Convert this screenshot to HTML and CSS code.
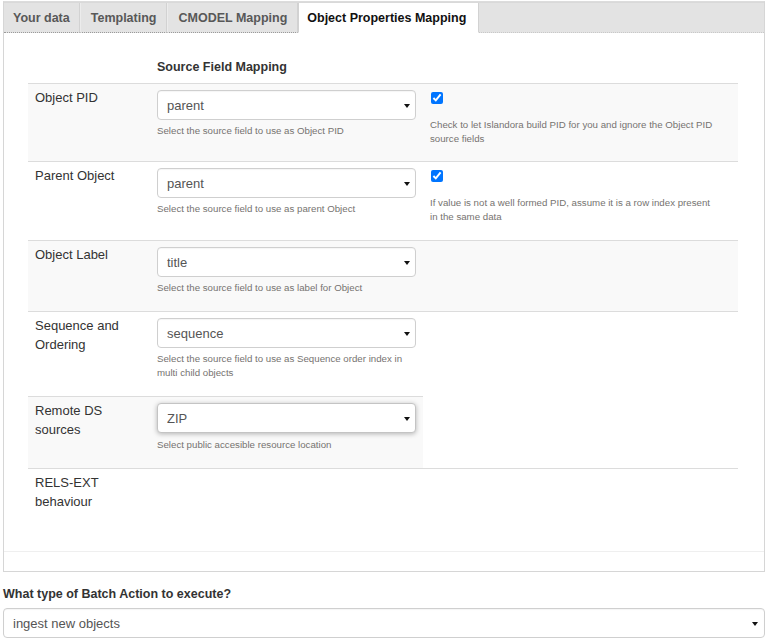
FILE: index.html
```html
<!DOCTYPE html>
<html>
<head>
<meta charset="utf-8">
<link rel="stylesheet" href="styles.css">
</head>
<body>
<div class="wrap">
  <div class="panel">
    <ul class="tabs">
      <li class="tab">Your data</li>
      <li class="tab">Templating</li>
      <li class="tab">CMODEL Mapping</li>
      <li class="tab active">Object Properties Mapping</li>
      <li class="tab-fill"></li>
    </ul>
    <div class="panel-body">
      <table class="map">
        <colgroup>
          <col class="c1"><col class="c2"><col class="c3">
        </colgroup>
        <thead>
          <tr><th></th><th>Source Field Mapping</th><th></th></tr>
        </thead>
        <tbody>
          <tr class="odd">
            <td class="lbl">Object PID</td>
            <td><div class="sel"><select><option>parent</option></select></div><p class="help">Select the source field to use as Object PID</p></td>
            <td><div class="chk"><input type="checkbox" checked></div><p class="help help3">Check to let Islandora build PID for you and ignore the Object PID source fields</p></td>
          </tr>
          <tr>
            <td class="lbl">Parent Object</td>
            <td><div class="sel"><select><option>parent</option></select></div><p class="help">Select the source field to use as parent Object</p></td>
            <td><div class="chk"><input type="checkbox" checked></div><p class="help help3 help3b">If value is not a well formed PID, assume it is a row index present in the same data</p></td>
          </tr>
          <tr class="odd">
            <td class="lbl">Object Label</td>
            <td><div class="sel"><select><option>title</option></select></div><p class="help">Select the source field to use as label for Object</p></td>
            <td></td>
          </tr>
          <tr>
            <td class="lbl">Sequence and Ordering</td>
            <td><div class="sel"><select><option>sequence</option></select></div><p class="help">Select the source field to use as Sequence order index in multi child objects</p></td>
            <td></td>
          </tr>
          <tr class="odd">
            <td class="lbl">Remote DS sources</td>
            <td><div class="sel focus"><select><option>ZIP</option></select></div><p class="help help5">Select public accesible resource location</p></td>
          </tr>
          <tr>
            <td class="lbl">RELS-EXT behaviour</td>
            <td></td>
            <td></td>
          </tr>
        </tbody>
      </table>
    </div>
    <div class="panel-foot"></div>
  </div>
  <label class="q">What type of Batch Action to execute?</label>
  <div class="sel wide"><select><option>ingest new objects</option></select></div>
</div>
</body>
</html>
```
FILE: styles.css
```css
html, body {
  margin: 0;
  padding: 0;
  background: #fff;
}
body {
  padding: 1px 0 0 3px;
  font-family: "Liberation Sans", Arial, sans-serif;
  font-size: 13px;
  color: #333;
}
.wrap {
  width: 762px;
}
.panel {
  border: 1px solid #d6d6d6;
  border-top-color: #dcdcdc;
}
.tabs {
  list-style: none;
  margin: 0;
  padding: 0;
  display: flex;
  height: 30px;
  background: #e3e3e3;
  border-top: 1px solid #d9d9d9;
}
.tab {
  font-size: 12.5px;
  font-weight: bold;
  color: #585858;
  line-height: 28px;
  padding: 1px 10px 0 10px;
  border-right: 1px solid #d2d2d2;
  border-left: 1px solid #ececec;
  border-bottom: 1px dotted #9a9a9a;
}
.tab:first-child {
  border-left: none;
  padding-left: 9px;
  padding-right: 9px;
}
.tab.active {
  background: #fff;
  color: #111;
  border-bottom: 1px solid #fff;
  border-left: 1px solid #d2d2d2;
  padding: 1px 12px 0 8px;
}
.tab-fill {
  flex: 1;
  border-bottom: 1px dotted #c8c8c8;
}
.panel-body {
  padding: 15px 25px 30px 24px;
}
.map {
  width: 710px;
  border-collapse: collapse;
  table-layout: fixed;
}
.c1 { width: 122px; }
.c2 { width: 273px; }
.c3 { width: 315px; }
.map th {
  text-align: left;
  font-size: 12.5px;
  font-weight: bold;
  color: #333;
  line-height: 19px;
  padding: 10px 7px 6px;
  border-bottom: 1px solid #dcdcdc;
}
.map td {
  vertical-align: top;
  padding: 6px 7px 10px 7px;
  border-top: 1px solid #dcdcdc;
}
.map tr.odd td {
  background: #f9f9f9;
}
.map td.lbl {
  padding-top: 4px;
  line-height: 19px;
  color: #333;
  padding-right: 20px;
}
.sel {
  position: relative;
  height: 30px;
}
.sel select {
  appearance: none;
  -webkit-appearance: none;
  display: block;
  width: 100%;
  height: 30px;
  margin: 0;
  padding: 0 0 0 9px;
  border: 1px solid #cfcfcf;
  border-radius: 4px;
  background: #fff;
  font-family: "Liberation Sans", Arial, sans-serif;
  font-size: 13px;
  color: #555;
  box-shadow: inset 0 1px 1px rgba(0,0,0,.04);
}
.sel::after {
  content: "";
  position: absolute;
  right: 6px;
  top: 14px;
  border-left: 3.5px solid transparent;
  border-right: 3.5px solid transparent;
  border-top: 4px solid #111;
  pointer-events: none;
}
.sel.focus select {
  border-color: #c4c4c4;
  box-shadow: 0 1px 5px rgba(0,0,0,.28);
}
.help {
  margin: 4px 0 6px;
  font-size: 9.7px;
  line-height: 14px;
  color: #767370;
}
.help5 {
  margin-top: 5px;
}
.help3 {
  margin: 8px 0 5px;
  width: 286px;
}
.help3b {
  margin-bottom: 6px;
}
.chk {
  height: 20px;
}
.chk input {
  margin: 2px 0 0 1px;
  width: 12px;
  height: 12px;
}
.panel-foot {
  height: 19px;
  border-top: 1px solid #efefef;
}
.q {
  display: block;
  margin: 13px 0 4px;
  font-size: 12.5px;
  font-weight: bold;
  line-height: 19px;
  color: #333;
}
.sel.wide::after {
  right: 7px;
}
```
